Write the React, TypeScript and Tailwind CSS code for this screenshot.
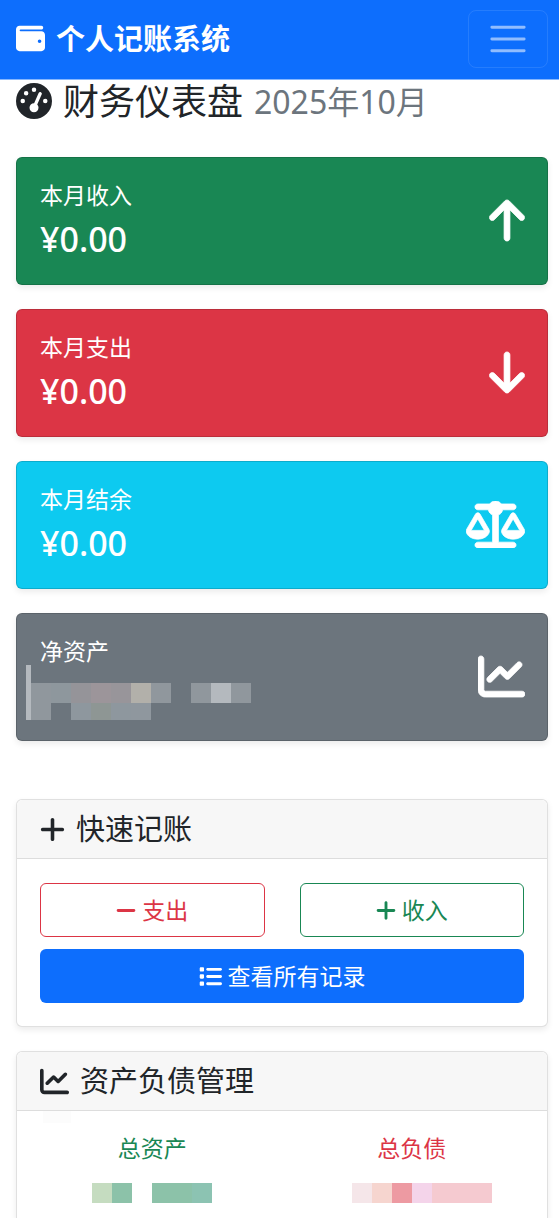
import React from 'react';
import type { IconType } from 'react-icons';
import {
  FaArrowDown,
  FaArrowUp,
  FaChartLine,
  FaGaugeHigh,
  FaList,
  FaMinus,
  FaPlus,
  FaScaleBalanced,
  FaWallet,
} from 'react-icons/fa6';

interface StatCardProps {
  title: string;
  amount?: string;
  color: string;
  icon: IconType;
  iconSize: string;
  children?: React.ReactNode;
}

const StatCard: React.FC<StatCardProps> = ({ title, amount, color, icon: Icon, iconSize, children }) => (
  <section
    className={`relative flex items-center justify-between rounded-md border border-black/15 py-[23px] pr-[22px] pl-[23px] text-white shadow-[0_3px_6px_rgba(0,0,0,0.08)] ${color}`}
  >
    <div>
      <h2 className="mb-2 text-[23px] leading-7">{title}</h2>
      <p className="h-11 text-[34px] leading-[44px] font-medium">{amount}</p>
    </div>
    <Icon className={`mb-[2px] stroke-8 ${iconSize}`} />
    {children}
  </section>
);

interface MosaicProps {
  cells: string[];
  height?: string;
}

// one 20px block per cell, used in place of hidden amounts
const Mosaic: React.FC<MosaicProps> = ({ cells, height = 'h-5' }) => (
  <div className={`flex ${height}`}>
    {cells.map((cell, i) => (
      <span key={i} className={`w-5 ${cell}`} />
    ))}
  </div>
);

interface PanelProps {
  title: string;
  icon: IconType;
  iconSize: string;
  className: string;
  children: React.ReactNode;
}

const Panel: React.FC<PanelProps> = ({ title, icon: Icon, iconSize, className, children }) => (
  <section className={`border border-black/12 bg-white shadow-[0_3px_6px_rgba(0,0,0,0.08)] ${className}`}>
    <h2 className="flex items-center gap-[11px] rounded-t-md border-b border-black/10 bg-[#f7f7f7] px-[23px] py-3 text-[29px] leading-[34px]">
      <Icon className={iconSize} />
      {title}
    </h2>
    {children}
  </section>
);

const netMask = [
  'bg-[#90979d]', 'bg-[#8e979d]', 'bg-[#959499]', 'bg-[#9c959a]', 'bg-[#98959a]', 'bg-[#b2b0aa]',
  'bg-[#90979d]', '', 'bg-[#90979d]', 'bg-[#b4b9be]', 'bg-[#90979d]',
];
const netMaskLower = ['bg-[#90979d]', '', 'bg-[#8e979e]', 'bg-[#8e9694]', 'bg-[#8e979e]', 'bg-[#8f979e]'];
const assetMask = ['bg-[#c5dcc0]', 'bg-[#8cc2a9]', '', 'bg-[#8cc2a9]', 'bg-[#8cc2a9]', 'bg-[#8cc3b2]'];
const debtMask = [
  '', 'bg-[#f5e6e9]', 'bg-[#f6d5cf]', 'bg-[#ed9aa2]', 'bg-[#f4d4ea]', 'bg-[#f5cad0]', 'bg-[#f5cad0]', 'bg-[#f5cad0]',
];

const App: React.FC = () => {
  return (
    <div className="flex min-h-screen flex-col bg-white font-['Noto_Sans','Noto_Sans_CJK_SC',sans-serif] text-[#212529]">
      <nav className="flex items-center justify-between border-b border-[#86b7fe] bg-[#0d6efd] pt-[10px] pr-[11px] pb-[11px] pl-4">
        <a href="#" className="flex items-center gap-[11px] text-[29px] leading-[44px] font-bold text-white">
          <FaWallet className="mb-[2px] size-[29px]" />
          个人记账系统
        </a>
        <button
          type="button"
          aria-label="菜单"
          className="flex h-[58px] w-20 items-center justify-center rounded-lg border border-white/10"
        >
          <svg viewBox="0 0 30 30" className="size-11" stroke="rgba(255,255,255,0.55)" strokeWidth="2" strokeLinecap="round">
            <path d="M4 7h22M4 15h22M4 23h22" />
          </svg>
        </button>
      </nav>

      <main className="flex flex-1 flex-col pr-[11px] pl-4">
        <h1 className="mb-[33px] flex items-center text-[36px] leading-[44px]">
          <FaGaugeHigh className="mr-[11px] mb-[2px] size-9" />
          财务仪表盘
          <small className="ml-[11px] text-[32px] text-[#6c757d]">2025年10月</small>
        </h1>

        <div className="mb-[58px] flex flex-col gap-6">
          <StatCard title="本月收入" amount="¥0.00" color="bg-[#198754]" icon={FaArrowUp} iconSize="h-[47px] w-9" />
          <StatCard title="本月支出" amount="¥0.00" color="bg-[#dc3545]" icon={FaArrowDown} iconSize="h-[47px] w-9" />
          <StatCard title="本月结余" amount="¥0.00" color="bg-[#0dcaf0]" icon={FaScaleBalanced} iconSize="h-[47px] w-[59px]" />
          <StatCard title="净资产" color="bg-[#6c757d]" icon={FaChartLine} iconSize="size-[47px]">
            <div className="absolute top-[51px] left-[9px] flex" aria-hidden="true">
              <div className="h-[55px] w-[5px] bg-[#b4b9be]" />
              <div className="mt-[18px]">
                <Mosaic cells={netMask} />
                <Mosaic cells={netMaskLower} height="h-[17px]" />
              </div>
            </div>
          </StatCard>
        </div>

        <Panel title="快速记账" icon={FaPlus} iconSize="h-[29px] w-[25px]" className="mb-6 rounded-md">
          <div className="grid grid-cols-2 gap-x-[35px] gap-y-3 px-[23px] pt-6 pb-[23px] text-[23px] leading-9">
            <button
              type="button"
              className="flex h-[54px] items-center justify-center gap-[6px] rounded-md border border-[#dc3545] text-[#dc3545]"
            >
              <FaMinus className="h-[23px] w-5" />
              支出
            </button>
            <button
              type="button"
              className="flex h-[54px] items-center justify-center gap-[6px] rounded-md border border-[#198754] text-[#198754]"
            >
              <FaPlus className="h-[23px] w-5" />
              收入
            </button>
            <a
              href="#"
              className="col-span-2 flex h-[54px] items-center justify-center gap-[6px] rounded-md bg-[#0d6efd] text-white"
            >
              <FaList className="size-[23px]" />
              查看所有记录
            </a>
          </div>
        </Panel>

        <Panel title="资产负债管理" icon={FaChartLine} iconSize="size-[29px]" className="flex-1 rounded-t-md border-b-0">
          <div className="relative grid grid-cols-2 gap-x-[35px] px-[23px] pt-[23px] text-[23px] leading-7">
            <span className="absolute top-0 left-[26px] h-3 w-7 bg-[#fcfcfc]" />
            <div className="flex flex-col items-center gap-[21px]">
              <h3 className="text-[#198754]">总资产</h3>
              <Mosaic cells={assetMask} />
            </div>
            <div className="flex flex-col items-center gap-[21px]">
              <h3 className="text-[#dc3545]">总负债</h3>
              <Mosaic cells={debtMask} />
            </div>
          </div>
        </Panel>
      </main>
    </div>
  );
};

export default App;
